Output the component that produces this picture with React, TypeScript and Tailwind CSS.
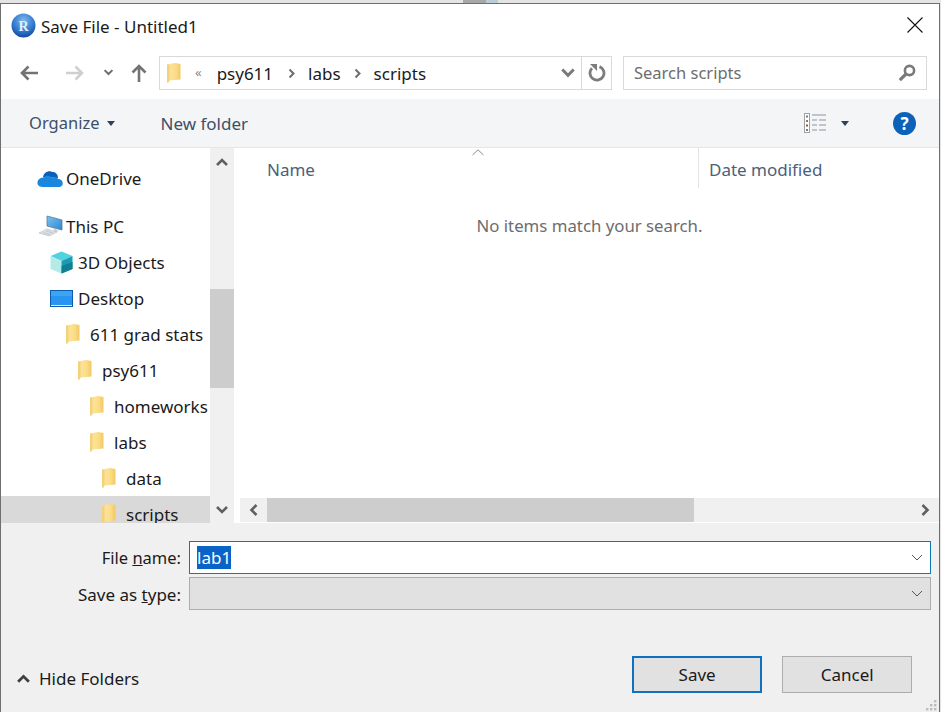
import { Fragment } from 'react';

function Folder({ className = '' }: { className?: string }) {
  return (
    <svg width="15" height="22" viewBox="0 0 15 22" className={`shrink-0 ${className}`}>
      <defs>
        <linearGradient id="folderFace" x1="0" x2="1" y1="0" y2="0">
          <stop offset="0" stopColor="#fbe49a" />
          <stop offset="0.55" stopColor="#fbdf8c" />
          <stop offset="1" stopColor="#f3c964" />
        </linearGradient>
      </defs>
      <path d="M1 2.5 L9 1 L14.5 2 V17.5 L3.5 18.5 L2 21 L1 20 Z" fill="url(#folderFace)" />
      <path d="M1 2.5 L3.5 2.5 V18.5 L2 21 L1 20 Z" fill="#f4d27c" />
      <path d="M9 1 L11 3 V17.5 H9 Z" fill="#f8da88" />
    </svg>
  );
}

function Arrow({ flip = false, color }: { flip?: boolean; color: string }) {
  return (
    <svg width="20" height="18" viewBox="0 0 20 18" className={flip ? 'rotate-180' : ''}>
      <path d="M19 9 H3 M9.5 2.5 L3 9 L9.5 15.5" fill="none" stroke={color} strokeWidth="2.6" />
    </svg>
  );
}

function Chevron({ dir, size = 14, color = '#606060' }: { dir: 'up' | 'down' | 'left' | 'right'; size?: number; color?: string }) {
  const paths = {
    up: 'M2 10 L7 5 L12 10',
    down: 'M2 4 L7 9 L12 4',
    left: 'M9.5 2 L4.5 7 L9.5 12',
    right: 'M4.5 2 L9.5 7 L4.5 12',
  };
  return (
    <svg width={size} height={size} viewBox="0 0 14 14" className="shrink-0">
      <path d={paths[dir]} fill="none" stroke={color} strokeWidth="2.6" />
    </svg>
  );
}

function ThinChevron() {
  return (
    <svg width="12" height="7" viewBox="0 0 12 7" className="shrink-0">
      <path d="M1 1 L6 6 L11 1" fill="none" stroke="#555" strokeWidth="1" />
    </svg>
  );
}

function RLogo() {
  return (
    <svg width="25" height="25" viewBox="0 0 25 25" className="shrink-0">
      <defs>
        <radialGradient id="rball" cx="0.5" cy="0.3" r="0.75">
          <stop offset="0" stopColor="#7fb8ec" />
          <stop offset="0.6" stopColor="#2f78cc" />
          <stop offset="1" stopColor="#0f3f96" />
        </radialGradient>
      </defs>
      <circle cx="12.5" cy="12.5" r="12" fill="url(#rball)" />
      <text x="12.5" y="17.5" textAnchor="middle" fontSize="14" fontWeight="700" fill="#dff0ff" fontFamily="Liberation Serif, serif">R</text>
    </svg>
  );
}

function OneDriveIcon() {
  return (
    <svg width="26" height="17" viewBox="0 0 26 17" className="shrink-0">
      <path d="M6 7 C7 2 12 0 15.5 2 C18 1.5 21 4 21 8 Z" fill="#0a5fb8" />
      <path d="M5.5 17 C1.5 17 0 14 0.5 12 C1 9 3.5 7.5 6.5 7.5 C9 5 13 5.5 15 8 C18 6.5 20.5 7.5 21 9 C24 9 25.8 11 25.8 13.5 C25.8 15.5 24 17 22 17 Z" fill="#1a86de" />
    </svg>
  );
}

function PcIcon() {
  return (
    <svg width="24" height="22" viewBox="0 0 24 22" className="shrink-0">
      <defs>
        <linearGradient id="pcScreen" x1="0" x2="1" y1="0" y2="1">
          <stop offset="0" stopColor="#7cc4f2" />
          <stop offset="1" stopColor="#2f86d0" />
        </linearGradient>
      </defs>
      <path d="M8 1 L23 5 V15 L8 11 Z" fill="url(#pcScreen)" stroke="#5a7a94" strokeWidth="0.8" />
      <path d="M14 13 L16 17 L20 16" fill="#c6ccd2" />
      <path d="M0 18 L8 14 L18 17 L10 21 Z" fill="#dfe2e5" stroke="#b4b9be" strokeWidth="0.6" />
      <path d="M4 17.6 L11 19.6 M7 16 L14 18" stroke="#b4b9be" strokeWidth="0.7" />
    </svg>
  );
}

function CubeIcon() {
  return (
    <svg width="23" height="23" viewBox="0 0 23 23" className="shrink-0">
      <path d="M11.5 0.5 L22.5 5 L11.5 10 L0.5 5 Z" fill="#4fd3de" />
      <path d="M0.5 5 L11.5 10 V22.5 L0.5 18 Z" fill="#b4ebe8" />
      <path d="M11.5 10 L22.5 5 V18 L11.5 22.5 Z" fill="#1a9bb0" />
      <path d="M11.5 15 L22.5 11 V18 L11.5 22.5 Z" fill="#0f7f96" />
    </svg>
  );
}

function DesktopIcon() {
  return (
    <svg width="23" height="17" viewBox="0 0 23 17" className="shrink-0">
      <rect x="0.5" y="0.5" width="22" height="16" fill="#2a95f0" stroke="#0c5db0" />
      <rect x="1" y="1" width="21" height="5" fill="#3da3f4" />
      <rect x="1" y="15" width="21" height="1" fill="#d8ecfb" />
    </svg>
  );
}

function ViewsIcon() {
  return (
    <svg width="22" height="22" viewBox="0 0 22 22">
      <rect x="0.5" y="1.5" width="5" height="19" fill="#fff" stroke="#a0a0a0" />
      <rect x="2" y="3.5" width="2" height="2" fill="#7c7c7c" />
      <rect x="2" y="8" width="2" height="2" fill="#7c7c7c" />
      <rect x="2" y="12.5" width="2" height="2" fill="#8a5a20" />
      <rect x="2" y="17" width="2" height="2" fill="#7c7c7c" />
      <path d="M8 3 H22 M8 8 H13 M15 8 H22 M8 13 H13 M15 13 H22 M8 18 H13 M15 18 H22" stroke="#8b93a0" strokeWidth="1" />
    </svg>
  );
}

function SearchIcon() {
  return (
    <svg width="18" height="18" viewBox="0 0 18 18" className="ml-auto shrink-0">
      <circle cx="11.5" cy="6.5" r="4.6" fill="none" stroke="#7a7a7a" strokeWidth="2.6" />
      <path d="M8 10 L1.8 16.2" stroke="#7a7a7a" strokeWidth="3.2" />
    </svg>
  );
}

function Caret({ color = '#2f3f5c' }: { color?: string }) {
  return (
    <svg width="8" height="5" viewBox="0 0 8 5" className="shrink-0">
      <path d="M0 0 H8 L4 5 Z" fill={color} />
    </svg>
  );
}

function Grip() {
  const dots = [[9, 0], [5, 4], [9, 4], [1, 8], [5, 8], [9, 8]];
  return (
    <svg width="12" height="11" viewBox="0 0 12 11">
      {dots.map(([x, y]) => (
        <rect key={`${x}-${y}`} x={x} y={y} width="2.4" height="2.4" fill="#bcbcbc" />
      ))}
    </svg>
  );
}

const tree = [
  { label: 'This PC', pl: 'pl-[38px]', gap: 'gap-[3px]', icon: <PcIcon /> },
  { label: '3D Objects', pl: 'pl-[49px]', gap: 'gap-[5px]', icon: <CubeIcon /> },
  { label: 'Desktop', pl: 'pl-[49px]', gap: 'gap-[5px]', icon: <DesktopIcon /> },
  { label: '611 grad stats', pl: 'pl-[64px]', gap: 'gap-[10px]', icon: <Folder /> },
  { label: 'psy611', pl: 'pl-[76px]', gap: 'gap-[10px]', icon: <Folder /> },
  { label: 'homeworks', pl: 'pl-[88px]', gap: 'gap-[10px]', icon: <Folder /> },
  { label: 'labs', pl: 'pl-[88px]', gap: 'gap-[10px]', icon: <Folder /> },
  { label: 'data', pl: 'pl-[100px]', gap: 'gap-[10px]', icon: <Folder /> },
];

const crumbs = ['psy611', 'labs', 'scripts'];

export default function App() {
  return (
    <div className="h-[712px] w-[941px] overflow-hidden bg-[#e4e4e4] font-['Noto_Sans',sans-serif] text-[17px] leading-none text-[#1a1a1a]">
      <div className="flex h-[3px] pl-[463px]">
        <div className="w-[23px] bg-[#a8a8a8]" />
        <div className="w-[12px] bg-[#b8cdd6]" />
      </div>
      <div className="flex h-[709px] w-[940px] flex-col border-t border-r border-l border-[#6f6f6f] bg-white">
        <div className="flex h-[42px] shrink-0 items-center pr-[16px] pl-[10px]">
          <RLogo />
          <span className="ml-[5px] pt-[2px] text-[17px]">Save File - Untitled1</span>
          <svg width="16" height="16" viewBox="0 0 16 16" className="ml-auto">
            <path d="M0.5 0.5 L15.5 15.5 M15.5 0.5 L0.5 15.5" stroke="#111" strokeWidth="1.1" />
          </svg>
        </div>

        <div className="flex h-[53px] shrink-0 items-center">
          <div className="ml-[18px]"><Arrow color="#737373" /></div>
          <div className="ml-[26px]"><Arrow flip color="#cfcfcf" /></div>
          <div className="ml-[18px]"><Chevron dir="down" size={11} color="#6f6f6f" /></div>
          <div className="ml-[15px] -rotate-90"><Arrow flip color="#737373" /></div>

          <div className="ml-[10px] flex h-[34px] w-[453px] items-center border border-[#d9d9d9]">
            <Folder className="ml-[6px]" />
            <span className="ml-[14px] text-[13px] text-[#8a8a8a]">«</span>
            <span className="ml-[15px] flex items-center pt-[1px]">
              {crumbs.map((crumb, i) => (
                <Fragment key={crumb}>
                  {i > 0 && (
                    <span className={i === 1 ? 'mr-[11px] ml-[13px]' : 'mx-[11px]'}><Chevron dir="right" size={11} color="#6f6f6f" /></span>
                  )}
                  <span>{crumb}</span>
                </Fragment>
              ))}
            </span>
            <span className="mr-[5px] ml-auto"><Chevron dir="down" size={16} color="#7a7a7a" /></span>
            <div className="flex h-full w-[30px] items-center justify-center border-l border-[#d9d9d9]">
              <svg width="18" height="19" viewBox="0 0 18 19">
                <path d="M11.5 3.6 A7 7 0 1 1 4 5.2" fill="none" stroke="#7d7d7d" strokeWidth="2.8" />
                <path d="M2 1 L9 1 L9 8 Z" fill="#7d7d7d" />
              </svg>
            </div>
          </div>

          <div className="ml-[11px] flex h-[34px] w-[304px] items-center border border-[#d9d9d9] pr-[10px] pl-[10px] text-[#6d6d6d]">
            <span className="pt-[2px] text-[16.5px]">Search scripts</span>
            <SearchIcon />
          </div>
        </div>

        <div className="flex h-[49px] shrink-0 items-center border-b border-[#e6e6e6] bg-[#f4f5f7] pr-[23px] pl-[28px] text-[#3e4f68]">
          <span className="text-[16.5px]">Organize</span>
          <span className="ml-[8px]"><Caret /></span>
          <span className="ml-[45px] text-[17px]">New folder</span>
          <span className="ml-auto"><ViewsIcon /></span>
          <span className="ml-[15px]"><Caret /></span>
          <div className="ml-[44px] flex h-[23px] w-[23px] items-center justify-center rounded-full bg-[#0b62b8] text-[17px] font-bold text-white">?</div>
        </div>

        <div className="flex h-[375px] shrink-0">
          <div className="flex w-[209px] flex-col overflow-hidden pt-[12px]">
            <div className="flex h-[36px] shrink-0 items-center gap-[3px] pl-[36px]">
              <OneDriveIcon />
              <span>OneDrive</span>
            </div>
            <div className="h-[12px] shrink-0" />
            {tree.map((row) => (
              <div key={row.label} className={`flex h-[36px] shrink-0 items-center whitespace-nowrap ${row.pl} ${row.gap}`}>
                {row.icon}
                <span>{row.label}</span>
              </div>
            ))}
            <div className="flex h-[36px] shrink-0 items-center gap-[10px] bg-[#d9d9d9] pl-[100px]">
              <Folder />
              <span>scripts</span>
            </div>
          </div>

          <div className="flex w-[24px] shrink-0 flex-col bg-[#f0f0f0]">
            <div className="flex h-[28px] items-center justify-center"><Chevron dir="up" /></div>
            <div className="mt-[113px] h-[99px] bg-[#cdcdcd]" />
            <div className="mt-auto flex h-[26px] items-center justify-center"><Chevron dir="down" /></div>
          </div>

          <div className="ml-[6px] flex min-w-0 flex-1 flex-col">
            <div className="flex h-[40px] shrink-0 text-[#4c607a]">
              <div className="relative flex w-[459px] items-center border-r border-[#e3e3e3] pt-[2px] pl-[27px]">
                <span>Name</span>
                <svg width="12" height="7" viewBox="0 0 12 7" className="absolute top-[1px] left-[232px]">
                  <path d="M0.5 6 L6 0.8 L11.5 6" fill="none" stroke="#8a8a8a" />
                </svg>
              </div>
              <div className="flex items-center pt-[2px] pl-[10px]">Date modified</div>
            </div>
            <div className="flex h-[310px] shrink-0 justify-center pt-[30px] text-[16.8px] text-[#6d6d6d]">
              No items match your search.
            </div>
            <div className="flex h-[24px] shrink-0 items-center bg-[#f0f0f0] pr-[4px]">
              <div className="flex w-[27px] justify-center"><Chevron dir="left" /></div>
              <div className="h-full w-[427px] bg-[#cdcdcd]" />
              <div className="ml-auto flex w-[20px] justify-center"><Chevron dir="right" /></div>
            </div>
          </div>
        </div>

        <div className="flex flex-1 flex-col bg-[#f0f0f0]">
          <div className="mt-[18px] flex items-center">
            <div className="w-[180px] pt-[2px] text-right text-[16.5px]">File <span className="underline">n</span>ame:</div>
            <div className="ml-[8px] flex h-[33px] w-[742px] items-center border border-[#0f78b8] bg-white pr-[7px] pl-[7px]">
              <span className="flex h-[23px] items-center bg-[#0a64c8] text-white">lab1</span>
              <span className="ml-auto"><ThinChevron /></span>
            </div>
          </div>
          <div className="mt-[3px] flex items-center">
            <div className="w-[180px] pt-[2px] text-right">Save as <span className="underline">t</span>ype:</div>
            <div className="ml-[8px] flex h-[33px] w-[742px] items-center justify-end border border-[#adadad] bg-[#e1e1e1] pr-[7px]">
              <ThinChevron />
            </div>
          </div>

          <div className="mt-[46px] flex items-start">
            <span className="mt-[15px] ml-[15px]"><Chevron dir="up" size={15} color="#404040" /></span>
            <span className="mt-[14px] ml-[8px]">Hide Folders</span>
            <button type="button" className="ml-[493px] h-[37px] w-[130px] border-2 border-[#0f72c0] bg-[#e1e1e1]">Save</button>
            <button type="button" className="ml-[20px] h-[37px] w-[130px] border border-[#adadad] bg-[#e1e1e1]">Cancel</button>
          </div>
          <div className="mt-auto flex justify-end pr-[2px] pb-[1px]"><Grip /></div>
        </div>
      </div>
    </div>
  );
}
